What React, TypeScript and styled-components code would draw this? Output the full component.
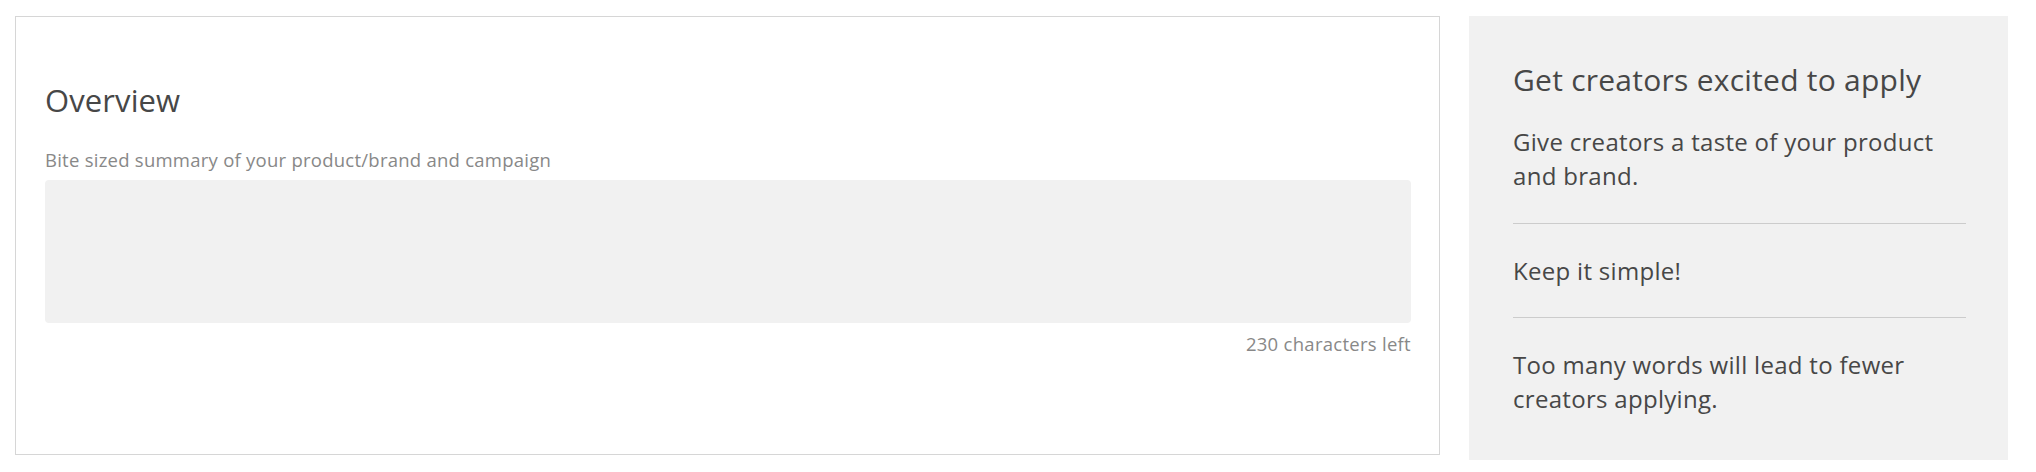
import React from "react";
import styled, { createGlobalStyle } from "styled-components";

const GlobalStyle = createGlobalStyle`
  html, body {
    margin: 0;
    padding: 0;
    background: #ffffff;
  }
  body {
    font-family: "Open Sans", Lato, Arial, sans-serif;
    color: #474747;
  }
  * { box-sizing: border-box; }
`;

const Page = styled.div`
  display: flex;
  align-items: flex-start;
  gap: 29px;
  padding: 16px 28px 0 15px;
  width: 2036px;
`;

const Card = styled.section`
  width: 1425px;
  height: 439px;
  border: 1px solid #d6d6d6;
  background: #ffffff;
  padding: 66px 28px 0 29px;
  display: flex;
  flex-direction: column;
`;

const Title = styled.h2`
  margin: 0 0 30px 0;
  font-size: 31px;
  line-height: 34px;
  letter-spacing: 0.1px;
  font-weight: 400;
  color: #474747;
`;

const FieldLabel = styled.label`
  display: block;
  font-size: 18.5px;
  line-height: 25px;
  letter-spacing: 0.25px;
  color: #888888;
  margin-bottom: 8px;
`;

const TextArea = styled.textarea`
  display: block;
  width: 100%;
  height: 143px;
  border: none;
  border-radius: 4px;
  background: #f1f1f1;
  resize: none;
  outline: none;
  padding: 12px 14px;
  font-family: inherit;
  font-size: 18px;
  color: #474747;
`;

const Counter = styled.div`
  margin-top: 8px;
  text-align: right;
  font-size: 18.5px;
  line-height: 25px;
  letter-spacing: 0.28px;
  color: #888888;
`;

const Aside = styled.aside`
  width: 539px;
  height: 444px;
  background: #f1f1f1;
  padding: 47px 42px 0 44px;
`;

const AsideTitle = styled.h3`
  margin: 0 0 28px 0;
  font-size: 30px;
  line-height: 34px;
  letter-spacing: 0.25px;
  font-weight: 400;
  color: #474747;
`;

const TipList = styled.div`
  display: flex;
  flex-direction: column;
`;

const Tip = styled.p<{ $first?: boolean }>`
  margin: 0;
  font-size: 24px;
  line-height: 34px;
  letter-spacing: 0.3px;
  color: #474747;
  padding: ${(p) => (p.$first ? "0 24px 30px 0" : "30px 24px 29px 0")};
  border-top: ${(p) => (p.$first ? "none" : "1px solid #cccccc")};
`;

export default function App() {
  return (
    <>
      <GlobalStyle />
      <Page>
        <Card>
          <Title>Overview</Title>
          <FieldLabel htmlFor="overview">
            Bite sized summary of your product/brand and campaign
          </FieldLabel>
          <TextArea id="overview" />
          <Counter>230 characters left</Counter>
        </Card>
        <Aside>
          <AsideTitle>Get creators excited to apply</AsideTitle>
          <TipList>
            <Tip $first>Give creators a taste of your product and brand.</Tip>
            <Tip>Keep it simple!</Tip>
            <Tip>Too many words will lead to fewer creators applying.</Tip>
          </TipList>
        </Aside>
      </Page>
    </>
  );
}
